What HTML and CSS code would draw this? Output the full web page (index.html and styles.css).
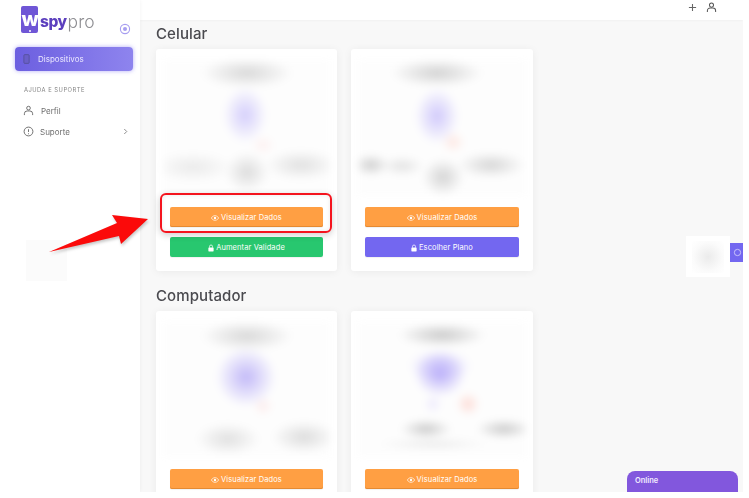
FILE: index.html
```html
<!DOCTYPE html>
<html lang="pt">
<head>
<meta charset="utf-8">
<title>wspypro</title>
<link rel="stylesheet" href="styles.css">
</head>
<body>
<div class="frame">
  <aside class="sidebar">
    <div class="brand">
      <div class="logo">
        <span class="logo-phone"><span class="logo-w">w</span></span><span class="logo-spy">spy</span><span class="logo-pro">pro</span>
      </div>
      <svg class="collapse" viewBox="0 0 12 12"><circle cx="6" cy="6" r="4.6" fill="none" stroke="#a79ef0" stroke-width="1.1"/><circle cx="6" cy="6" r="2" fill="#a79ef0"/></svg>
    </div>
    <a class="nav-active">
      <svg class="nav-phone" viewBox="0 0 8 12"><rect x="1" y="1" width="6" height="10" rx="1" fill="#6a5fc8" stroke="#55509a" stroke-width="1"/></svg>
      <span>Dispositivos</span>
    </a>
    <div class="nav-title">AJUDA E SUPORTE</div>
    <a class="nav-item">
      <svg class="nav-icon" viewBox="0 0 12 12"><circle cx="6" cy="3.4" r="2" fill="none" stroke="#666" stroke-width="1"/><path d="M1.5 11v-1.5A3 3 0 0 1 4.500 6.500h3a3 3 0 0 1 3 3V11" fill="none" stroke="#666" stroke-width="1"/></svg>
      <span class="nav-text-a">Perfil</span>
    </a>
    <a class="nav-item">
      <svg class="nav-icon" viewBox="0 0 12 12"><circle cx="6" cy="6" r="4.800" fill="none" stroke="#666" stroke-width="1"/><path d="M6 3.500v3M6 8v1" stroke="#666" stroke-width="1"/></svg>
      <span class="nav-text-b">Suporte</span>
      <svg class="chev" viewBox="0 0 6 8"><path d="M1.500 1l3 3-3 3" fill="none" stroke="#777" stroke-width="1"/></svg>
    </a>
  </aside>
  <main class="main">
    <header class="topbar">
      <svg class="top-plus" viewBox="0 0 10 10"><path d="M5 1v8M1 5h8" stroke="#666" stroke-width="1.200"/></svg>
      <svg class="top-user" viewBox="0 0 12 12"><circle cx="6" cy="3.400" r="2.200" fill="none" stroke="#555" stroke-width="1.100"/><path d="M1.500 11V9.500a3 3 0 0 1 3-3h3a3 3 0 0 1 3 3V11" fill="none" stroke="#555" stroke-width="1.100"/></svg>
    </header>
    <div class="content">
      <h2 class="section-title">Celular</h2>
      <div class="cards">
        <article class="card">
          <div class="shot shot-a"></div>
          <div class="actions">
            <button class="btn btn-orange"><svg class="ico" viewBox="0 0 12 8"><path d="M.5 4C2 1.500 4 .5 6 .5S10 1.500 11.500 4C10 6.500 8 7.500 6 7.500S2 6.500 .5 4z" fill="none" stroke="#fff" stroke-width="1"/><circle cx="6" cy="4" r="1.800" fill="#fff"/></svg>Visualizar Dados</button>
            <button class="btn btn-green"><svg class="ico-lock" viewBox="0 0 8 10"><path d="M2 4.500V3a2 2 0 0 1 4 0v1.500" fill="none" stroke="#fff" stroke-width="1"/><rect x=".5" y="4.200" width="7" height="5.300" rx=".8" fill="#fff"/></svg>Aumentar Validade</button>
          </div>
        </article>
        <article class="card">
          <div class="shot shot-b"></div>
          <div class="actions">
            <button class="btn btn-orange"><svg class="ico" viewBox="0 0 12 8"><path d="M.5 4C2 1.500 4 .5 6 .5S10 1.500 11.500 4C10 6.500 8 7.500 6 7.500S2 6.500 .5 4z" fill="none" stroke="#fff" stroke-width="1"/><circle cx="6" cy="4" r="1.800" fill="#fff"/></svg>Visualizar Dados</button>
            <button class="btn btn-purple"><svg class="ico-lock" viewBox="0 0 8 10"><path d="M2 4.500V3a2 2 0 0 1 4 0v1.500" fill="none" stroke="#fff" stroke-width="1"/><rect x=".5" y="4.200" width="7" height="5.300" rx=".8" fill="#fff"/></svg>Escolher Plano</button>
          </div>
        </article>
      </div>
      <h2 class="section-title section-second">Computador</h2>
      <div class="cards">
        <article class="card">
          <div class="shot shot-c"></div>
          <div class="actions">
            <button class="btn btn-orange"><svg class="ico" viewBox="0 0 12 8"><path d="M.5 4C2 1.500 4 .5 6 .5S10 1.500 11.500 4C10 6.500 8 7.500 6 7.500S2 6.500 .5 4z" fill="none" stroke="#fff" stroke-width="1"/><circle cx="6" cy="4" r="1.800" fill="#fff"/></svg>Visualizar Dados</button>
          </div>
        </article>
        <article class="card">
          <div class="shot shot-d"></div>
          <div class="actions">
            <button class="btn btn-orange"><svg class="ico" viewBox="0 0 12 8"><path d="M.5 4C2 1.500 4 .5 6 .5S10 1.500 11.500 4C10 6.500 8 7.500 6 7.500S2 6.500 .5 4z" fill="none" stroke="#fff" stroke-width="1"/><circle cx="6" cy="4" r="1.800" fill="#fff"/></svg>Visualizar Dados</button>
          </div>
        </article>
      </div>
    </div>
  </main>

  <div class="redact-left"></div>
  <div class="highlight"></div>
  <svg class="arrow" viewBox="0 0 110 50">
    <path class="arrow-shadow" d="M2 41 70 12 65 4 101 8 74 33 72 25Z"/>
    <path d="M1 39 69 10 64 2 100 6 73 31 71 23Z" fill="#fb0a0a"/>
  </svg>
  <div class="side-widget"><span class="side-blob"></span></div>
  <div class="side-tab"><svg viewBox="0 0 10 10"><circle cx="5" cy="5" r="3.500" fill="none" stroke="#cfc9fb" stroke-width="1"/></svg></div>
  <div class="chat">Online</div>
</div>
</body>
</html>
```

FILE: styles.css
```css
* { box-sizing: border-box; }
html, body { margin: 0; padding: 0; background: #fff; }
body {
  width: 749px;
  height: 498px;
  overflow: hidden;
  font-family: "Inter", "Open Sans", "Liberation Sans", sans-serif;
}
.frame {
  position: relative;
  display: flex;
  width: 743px;
  height: 492px;
  overflow: hidden;
  background: #f8f8f8;
}

/* Sidebar */
.sidebar {
  flex: 0 0 140px;
  background: #fff;
  padding: 6px 0 0 15px;
  box-shadow: 1px 0 3px rgba(0,0,0,.03);
  z-index: 1;
}
.brand { display: flex; align-items: flex-start; height: 41px; }
.logo { display: flex; align-items: flex-start; margin-left: 6px; filter: blur(.5px); }
.logo-phone {
  position: relative;
  width: 17px;
  height: 27px;
  background: #6f56d6;
  border-radius: 2px;
  display: flex;
  align-items: center;
  justify-content: center;
}
.logo-phone::after {
  content: "";
  position: absolute;
  left: 8px; bottom: 1px;
  width: 2px; height: 2px;
  background: #fff;
  border-radius: 50%;
}
.logo-w { color: #fff; font: 800 20px/1 "Inter", sans-serif; margin-left: 1px; margin-top: -1px; }
.logo-spy { color: #5c3fbe; font: 800 15.500px/1 "Inter", sans-serif; margin-top: 8px; margin-left: 2px; letter-spacing: -.5px; }
.logo-pro { color: #8e8e92; font: 300 17.500px/1 "Inter", sans-serif; margin-top: 7px; margin-left: 1px; }
.collapse { width: 12px; height: 12px; margin: 17px 0 0 24px; filter: blur(.3px); }
.nav-active {
  display: flex;
  align-items: center;
  gap: 8px;
  width: 118px;
  height: 24px;
  padding-left: 8px;
  border-radius: 4px;
  background: linear-gradient(90deg, #6c5fe0, #8e84ee);
  box-shadow: 0 0 4px rgba(115,103,240,.55);
  color: #ece9ff;
  font-size: 8px;
  filter: blur(.3px);
}
.nav-phone { width: 7px; height: 12px; }
.nav-title {
  margin: 15px 0 0 9px;
  font-size: 5.800px;
  line-height: 8px;
  letter-spacing: .5px;
  color: #858585;
  filter: blur(.35px);
}
.nav-item {
  display: flex;
  align-items: center;
  height: 21px;
  color: #6e6e6e;
  font-size: 8px;
  margin-left: 8px;
  width: 105px;
  filter: blur(.35px);
}
.nav-title + .nav-item { margin-top: 6px; }
.nav-icon { width: 11px; height: 11px; flex: none; }
.nav-text-a { margin-left: 7px; }
.nav-text-b { margin-left: 6px; flex: 1; }
.chev { width: 5px; height: 7px; }

/* Main */
.main { flex: 1; min-width: 0; }
.topbar {
  height: 20px;
  background: #fff;
  display: flex;
  justify-content: flex-end;
  align-items: flex-start;
  padding: 2px 26px 0 0;
  gap: 9px;
  box-shadow: 0 1px 2px rgba(0,0,0,.03);
}
.top-plus { width: 9px; height: 9px; margin-top: 1px; filter: blur(.3px); }
.top-user { width: 11px; height: 11px; filter: blur(.3px); }
.content { padding: 5px 0 0 16px; }
.section-title {
  margin: 0;
  height: 24px;
  font-size: 15px;
  line-height: 18px;
  font-weight: 500;
  letter-spacing: .1px;
  color: #4a4a4f;
  filter: blur(.3px);
}
.section-second { margin-top: 16px; }
.cards { display: flex; gap: 14px; }
.card {
  width: 181px;
  height: 222px;
  background: #fff;
  border-radius: 3px;
  box-shadow: 0 1px 8px rgba(0,0,0,.06);
  padding: 11px 7px 0;
  flex: none;
}
.card + .card { width: 182px; }
.shot {
  height: 135px;
  background-color: #fdfdfd;
  background-repeat: no-repeat;
  filter: blur(3.500px);
}
.shot-a {
  background-image:
    radial-gradient(ellipse 46px 15px at 84px 13px, #d8d8d8, transparent),
    radial-gradient(ellipse 22px 28px at 82px 55px, #d4cefb, transparent),
    radial-gradient(ellipse 40px 15px at 30px 107px, #eaeaea, transparent),
    radial-gradient(ellipse 22px 20px at 84px 112px, #dcdcdc, transparent),
    radial-gradient(ellipse 36px 15px at 138px 105px, #e0e0e0, transparent),
    radial-gradient(ellipse 12px 10px at 100px 85px, #fdf0f0, transparent);
}
.shot-b {
  background-image:
    radial-gradient(ellipse 46px 14px at 79px 13px, #d2d2d2, transparent),
    radial-gradient(ellipse 22px 28px at 79px 56px, #d0c9fb, transparent),
    radial-gradient(ellipse 12px 11px at 95px 82px, #fde8e3, transparent),
    radial-gradient(ellipse 18px 11px at 13px 105px, #cecece, transparent),
    radial-gradient(ellipse 22px 10px at 44px 106px, #e2e2e2, transparent),
    radial-gradient(ellipse 21px 19px at 85px 117px, #d4d4d4, transparent),
    radial-gradient(ellipse 34px 13px at 133px 105px, #d6d6d6, transparent);
}
.shot-c {
  background-image:
    radial-gradient(ellipse 46px 15px at 84px 14px, #d8d8d8, transparent),
    radial-gradient(ellipse 30px 30px at 83px 55px, #c2b9f8, transparent),
    radial-gradient(ellipse 10px 10px at 100px 84px, #fcecec, transparent),
    radial-gradient(ellipse 32px 16px at 65px 117px, #e0e0e0, transparent),
    radial-gradient(ellipse 32px 16px at 141px 115px, #dcdcdc, transparent);
}
.shot-d {
  background-image:
    radial-gradient(ellipse 44px 12px at 84px 13px, #cacaca, transparent),
    radial-gradient(ellipse 26px 23px at 82px 52px, #bbb0f9, transparent),
    radial-gradient(ellipse 32px 17px at 82px 44px, #dcd7fc, transparent),
    radial-gradient(ellipse 12px 12px at 110px 82px, #fddcd6, transparent),
    radial-gradient(ellipse 9px 10px at 75px 82px, #edeafd, transparent),
    radial-gradient(ellipse 26px 10px at 68px 107px, #cbcbcb, transparent),
    radial-gradient(ellipse 28px 10px at 146px 107px, #cbcbcb, transparent),
    radial-gradient(ellipse 56px 7px at 75px 122px, #ececec, transparent);
}
.actions { display: flex; flex-direction: column; gap: 10px; padding: 12px 7px 0; }
.btn {
  display: flex;
  align-items: center;
  justify-content: center;
  gap: 2px;
  width: 100%;
  height: 20px;
  border: 0;
  border-radius: 2px;
  padding: 1px 0 0;
  color: #fff;
  font: 400 7.500px/1 "Inter", sans-serif;
  letter-spacing: .1px;
}
.btn-orange { background: #ff9f43; box-shadow: inset 0 -1px 0 #e58a32, 0 1px 1px rgba(0,0,0,.06); }
.btn-green { background: #28c76f; box-shadow: 0 1px 1px rgba(0,0,0,.06); }
.btn-purple { background: #7367f0; box-shadow: 0 1px 1px rgba(0,0,0,.06); }
.ico { width: 8px; height: 6px; }
.ico-lock { width: 6px; height: 8px; }

/* Overlays */
.redact-left {
  position: absolute;
  left: 26px; top: 240px;
  width: 41px; height: 41px;
  background: #fbfbfb;
  z-index: 2;
}
.highlight {
  position: absolute;
  left: 160px; top: 193px;
  width: 172px; height: 40px;
  border: 2px solid #f4141e;
  border-radius: 6px;
  box-shadow: 0 2px 7px rgba(0,0,0,.2), inset 0 0 4px rgba(0,0,0,.08);
  filter: blur(.2px);
  z-index: 3;
}
.arrow {
  position: absolute;
  left: 48px; top: 213px;
  width: 110px; height: 50px;
  z-index: 3;
}
.arrow-shadow { fill: rgba(0,0,0,.22); filter: blur(1.500px); }
.side-widget {
  position: absolute;
  left: 686px; top: 236px;
  width: 44px; height: 41px;
  background: #fff;
  display: flex;
  align-items: center;
  justify-content: center;
  z-index: 2;
}
.side-blob {
  width: 32px; height: 32px;
  background: radial-gradient(circle, #ebebeb, #fbfbfb 65%, transparent);
}
.side-tab {
  position: absolute;
  left: 730px; top: 243px;
  width: 14px; height: 19px;
  background: #7367f0;
  display: flex;
  align-items: center;
  justify-content: center;
  filter: blur(.2px);
  z-index: 2;
}
.side-tab svg { width: 9px; height: 9px; }
.chat {
  position: absolute;
  left: 627px; top: 471px;
  width: 111px; height: 21px;
  background: #8257dd;
  border-radius: 8px 8px 0 0;
  padding: 5px 0 0 8px;
  color: #f1ecff;
  font-size: 7.500px;
  line-height: 9px;
  font-weight: 600;
  z-index: 2;
}
```
